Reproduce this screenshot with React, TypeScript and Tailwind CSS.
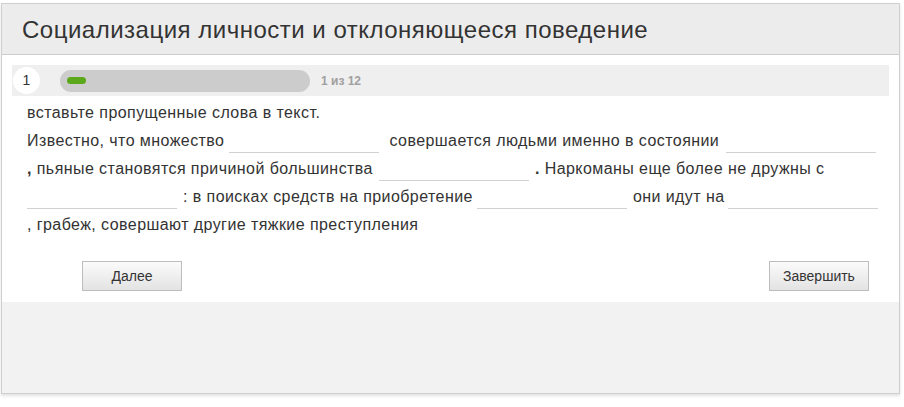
import React from "react";

const Blank = ({ className = "" }: { className?: string }) => (
  <span className={"inline-block w-[150px] h-[24px] border-b border-[#d2d2d2] shrink-0 " + className} />
);

export default function App() {
  return (
    <div className="w-[904px] h-[407px] bg-white font-['Liberation_Sans',Arial,sans-serif] text-[#333] pt-[3px] pl-[1px]">
      <div className="w-[899px] border border-[#cfcfcf] shadow-[0_2px_3px_rgba(0,0,0,0.12)]">
        <div className="h-[51px] bg-[#ececec] border-b border-[#cccccc] flex items-center px-[20px] pt-[1px] text-[24px] tracking-[0.5px] leading-none">
          Социализация личности и отклоняющееся поведение
        </div>
        <div className="bg-white pt-[10px] pb-[11px]">
          <div className="mx-[10px] h-[31px] bg-[#efefef] flex items-center">
            <div className="ml-[1px] w-[27px] h-[27px] rounded-full bg-white flex items-center justify-center text-[14px]">
              1
            </div>
            <div className="ml-[20px] w-[250px] h-[22px] rounded-full bg-[#cccccc] flex items-center pl-[7px]">
              <div className="w-[19px] h-[7px] rounded-full bg-[#5ba81b]" />
            </div>
            <div className="ml-[11px] text-[12px] font-bold text-[#a0a0a0]">1 из 12</div>
          </div>
          <div className="mt-[3px] pl-[25px] text-[16px] tracking-[0.43px] leading-none">
            <div className="h-[28px] flex items-center">вставьте пропущенные слова в текст.</div>
            <div className="h-[28px] flex items-center">
              <span>Известно, что множество</span>
              <Blank className="ml-[5px] mr-[10px]" />
              <span>совершается людьми именно в состоянии</span>
              <Blank className="ml-[7px]" />
            </div>
            <div className="h-[28px] flex items-center">
              <span>
                <b>,</b> пьяные становятся причиной большинства
              </span>
              <Blank className="ml-[6px] mr-[6px]" />
              <span>
                <b>.</b> Наркоманы еще более не дружны с
              </span>
            </div>
            <div className="h-[28px] flex items-center">
              <Blank className="mr-[6px]" />
              <span>: в поисках средств на приобретение</span>
              <Blank className="ml-[4px] mr-[6px]" />
              <span>они идут на</span>
              <Blank className="ml-[3px]" />
            </div>
            <div className="h-[28px] flex items-center">, грабеж, совершают другие тяжкие преступления</div>
          </div>
          <div className="mt-[22px] flex justify-between pl-[80px] pr-[30px]">
            <button className="w-[100px] h-[30px] border border-[#bdbdbd] bg-gradient-to-b from-[#fbfbfb] to-[#e3e3e3] text-[14px] text-[#333]">
              Далее
            </button>
            <button className="w-[100px] h-[30px] border border-[#bdbdbd] bg-gradient-to-b from-[#fbfbfb] to-[#e3e3e3] text-[14px] text-[#333]">
              Завершить
            </button>
          </div>
        </div>
        <div className="h-[91px] bg-[#f2f2f2]" />
      </div>
    </div>
  );
}
